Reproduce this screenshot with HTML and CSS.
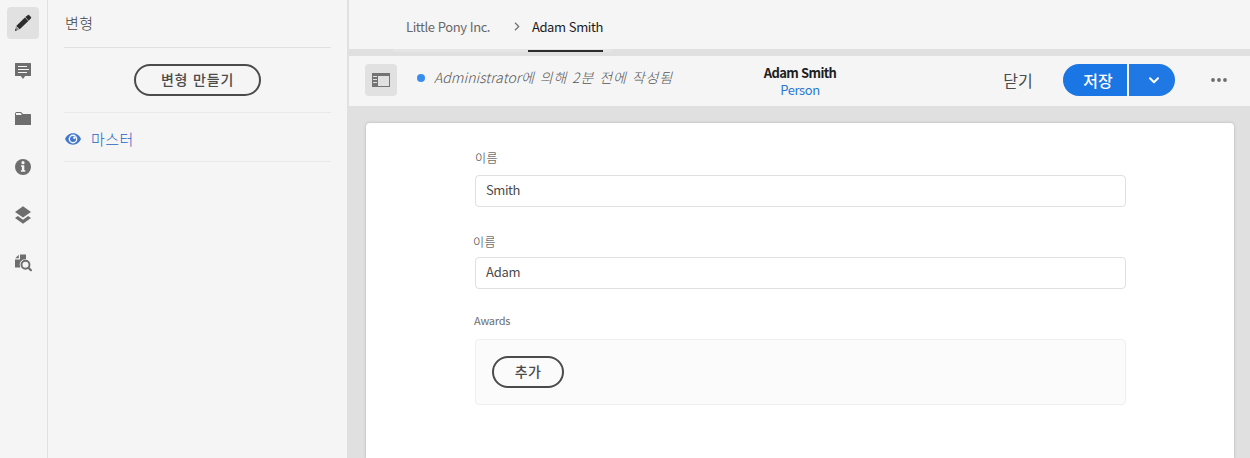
FILE: index.html
```html
<!DOCTYPE html>
<html lang="ko">
<head>
<meta charset="utf-8">
<title>Adam Smith</title>
<link rel="stylesheet" href="styles.css">
</head>
<body>
<div class="app">
  <nav class="rail">
    <button class="rail-btn active" aria-label="edit"><svg width="18" height="18" viewBox="0 0 18 18"><path fill="#2c2c2c" d="M11.3 3.1 14 .9q.5-.3 1 .1l2 2q.5.6 0 1.2l-2.3 2.5zM10.9 3.500l3.5 3.500-8.700 8.300-3.500-3.200z"/><path fill="#8a8a8a" d="m1.900 12.500 3.200 3.100L1 17z"/><path fill="#2c2c2c" d="m1.500 14.800 1.400 1.500L1 17z"/></svg></button>
    <button class="rail-btn" aria-label="comments"><svg width="18" height="18" viewBox="0 0 18 18"><path fill="#6e6e6e" d="M1.500 1h15q.5 0 .5.5v12q0 .5-.5.5h-5.300L9 17l-2.200-3H1.500q-.5 0-.5-.5v-12q0-.5.5-.5z"/><path stroke="#f5f5f5" d="M4 4.500h9M4 7.500h11M4 10.500h9"/></svg></button>
    <button class="rail-btn" aria-label="assets"><svg width="18" height="18" viewBox="0 0 18 18"><path fill="#6e6e6e" d="M1 3.500 2 2h5l2 2h7.500l.5.5v10.500H1z"/><path fill="#f5f5f5" d="M2 3h4.600l1.300 1.400L7 5H2z"/></svg></button>
    <button class="rail-btn" aria-label="info"><svg width="18" height="18" viewBox="0 0 18 18"><circle cx="9" cy="9" r="8" fill="#6e6e6e"/><circle cx="9" cy="4.700" r="1.600" fill="#f5f5f5"/><path fill="#f5f5f5" d="M7 7.200h3.300v5h1v1.600H6.900v-1.600h1V8.800H7z"/></svg></button>
    <button class="rail-btn" aria-label="structure"><svg width="18" height="18" viewBox="0 0 18 18"><path fill="#6e6e6e" d="M9 .2 17 6l-8 5.600L1 6zM9 13.700l5.100-3.600L17 12l-8 5.700L1 12l2.900-1.900z"/></svg></button>
    <button class="rail-btn" aria-label="search"><svg width="18" height="18" viewBox="0 0 18 18"><path fill="#6e6e6e" d="M6 .500h6v4.700a5.700 5.700 0 0 0-5.800 8.300H1V5.500h5zM4.800.700v3.600H1.200z"/><circle cx="11.500" cy="10.700" r="4" fill="none" stroke="#6e6e6e" stroke-width="1.900"/><path stroke="#6e6e6e" stroke-width="2.200" stroke-linecap="round" d="m14.500 13.800 2.400 2.400"/></svg></button>
  </nav>
  <aside class="panel">
    <h2 class="panel-title">변형</h2>
    <div class="create"><button class="pill create-btn">변형 만들기</button></div>
    <a class="master"><svg width="16" height="12" viewBox="0 0 16 12"><path fill="#4178cd" d="M8 .3C4 .3 1.400 3 0 6c1.400 3 4 5.700 8 5.700S14.600 9 16 6C14.600 3 12 .3 8 .3z"/><circle cx="8" cy="6" r="4.400" fill="#f5f5f5"/><circle cx="8" cy="6" r="3" fill="#4178cd"/><circle cx="9.400" cy="4.700" r="1.300" fill="#f5f5f5"/></svg><span>마스터</span></a>
  </aside>
  <main class="main">
    <header class="crumbs">
      <span class="crumb parent">Little Pony Inc.</span>
      <svg class="sep" width="6" height="9" viewBox="0 0 6 9"><path fill="none" stroke="#747474" stroke-width="1.300" d="m1 .8 3.700 3.700L1 8.200"/></svg>
      <span class="crumb current">Adam Smith</span>
    </header>
    <div class="track"><i></i></div>
    <section class="toolbar">
      <button class="toggle" aria-label="panel"><svg width="18" height="14" viewBox="0 0 18 14"><path fill="#747474" fill-rule="evenodd" d="M0 0h18v14H0zM6 3v10h11V3z"/><path stroke="#e1e1e1" d="M1 3.500h4M1 6.500h4M1 9.500h4"/></svg></button>
      <i class="dot"></i>
      <em class="status"><span class="latin">Administrator</span>에 의해 2분 전에 작성됨</em>
      <div class="heading"><strong>Adam Smith</strong><a>Person</a></div>
      <button class="close">닫기</button>
      <div class="split"><button class="save">저장</button><button class="more-save" aria-label="options"><svg width="10" height="7" viewBox="0 0 10 7"><path fill="none" stroke="#fff" stroke-width="2" stroke-linecap="round" stroke-linejoin="round" d="m1 1.200 4 4 4-4"/></svg></button></div>
      <svg class="dots" width="16" height="4" viewBox="0 0 16 4"><g fill="#6e6e6e"><circle cx="2" cy="2" r="1.900"/><circle cx="8" cy="2" r="1.900"/><circle cx="14" cy="2" r="1.900"/></g></svg>
    </section>
    <form class="card">
      <label class="label first">이름</label>
      <div class="input smith">Smith</div>
      <label class="label second">이름</label>
      <div class="input adam">Adam</div>
      <label class="label awards">Awards</label>
      <div class="multi"><button type="button" class="pill add">추가</button></div>
    </form>
  </main>
</div>
</body>
</html>
```

FILE: styles.css
```css
* { box-sizing: border-box; }
body { margin: 0; width: 1250px; height: 458px; overflow: hidden; font-family: "Noto Sans CJK KR", sans-serif; font-size: 14px; color: #4b4b4b; }
button { margin: 0; padding: 0; border: 0; background: none; font: inherit; color: inherit; }
svg { display: block; flex: none; }
.app { display: flex; height: 458px; background: #e0e0e0; }
.rail { width: 48px; padding: 7px 0 0 7px; background: #f5f5f5; border-right: 1px solid #e0e0e0; display: flex; flex-direction: column; gap: 16px; }
.rail-btn { width: 32px; height: 32px; border-radius: 4px; display: grid; place-items: center; }
.rail-btn.active { background: #e1e1e1; }
.panel { width: 299px; padding: 0 16px; background: #f5f5f5; }
.panel-title { margin: 0; height: 48px; padding: 10px 0 0 1px; border-bottom: 1px solid #e0e0e0; font-size: 15px; line-height: 26px; font-weight: 300; letter-spacing: .5px; color: #444; }
.create { height: 65px; padding-top: 16px; border-bottom: 1px solid #e9e9e9; display: flex; justify-content: center; }
.pill { height: 32px; border: 2px solid #4b4b4b; border-radius: 16px; line-height: 26px; padding-bottom: 2px; font-size: 14px; font-weight: 500; letter-spacing: .4px; color: #4b4b4b; }
.create-btn { width: 127px; letter-spacing: .8px; }
.master { height: 49px; padding: 3px 0 0 1px; border-bottom: 1px solid #e9e9e9; display: flex; align-items: center; gap: 10px; color: #2464c4; font-size: 15px; line-height: 24px; font-weight: 300; letter-spacing: .4px; }
.main { flex: 1; margin-left: 2px; display: flex; flex-direction: column; }
.crumbs { height: 49px; background: #f5f5f5; display: flex; align-items: flex-start; padding: 17px 0 0 57px; font-size: 13px; line-height: 20px; letter-spacing: -.42px; }
.crumb.parent { width: 108px; color: #686868; }
.sep { margin-top: 5px; }
.crumb.current { margin-left: 12px; color: #1c1c1c; }
.track { height: 3px; margin: 0 0 4px 44px; width: 219px; padding: 1px 0 0 135px; background: #e5e5e5; }
.track i { display: block; width: 75px; height: 2px; background: #2c2c2c; }
.toolbar { height: 50px; background: #f5f5f5; display: flex; align-items: flex-start; padding: 8px 0 0 16px; }
.toggle { width: 32px; height: 32px; border-radius: 4px; background: #e1e1e1; display: grid; place-items: center; }
.dot { width: 8px; height: 8px; margin: 10px 0 0 20px; border-radius: 50%; background: #378ef0; }
.status { width: 251px; margin: 1px 0 0 9px; line-height: 24px; font-weight: 300; letter-spacing: .93px; color: #555; white-space: nowrap; }
.latin { letter-spacing: .07px; }
.heading { width: 230px; display: flex; flex-direction: column; align-items: center; font-size: 13px; line-height: 18px; letter-spacing: -.45px; }
.heading strong { color: #1e1e1e; font-weight: 700; letter-spacing: -.65px; }
.heading a { margin-top: -1px; color: #2a78d6; }
.close { width: 32px; margin: 4px 0 0 87px; line-height: 24px; font-size: 16px; font-weight: 400; white-space: nowrap; }
.split { display: flex; gap: 2px; margin-left: 29px; height: 32px; color: #fff; }
.save { width: 64px; padding-left: 6px; background: #1a75e5; border-radius: 16px 0 0 16px; font-size: 16px; line-height: 30px; font-weight: 500; }
.more-save { width: 46px; padding-left: 3px; background: #1f78e4; border-radius: 0 16px 16px 0; display: grid; place-items: center; }
.dots { margin: 14px 0 0 36px; }
.card { width: 868px; flex: 1; margin: 17px 0 0 17px; padding: 0 0 0 109px; background: #fff; border-radius: 4px 4px 0 0; box-shadow: 0 0 2px 1px #c9c9c9; display: flex; flex-direction: column; align-items: flex-start; }
.label { font-size: 12px; line-height: 20px; height: 20px; font-weight: 300; letter-spacing: .4px; color: #333; }
.first { margin-top: 25px; }
.input { width: 651px; height: 32px; border: 1px solid #e0e0e0; border-radius: 4px; padding-left: 10px; line-height: 28px; font-size: 13px; letter-spacing: -.45px; }
.smith { margin-top: 7px; }
.second { margin: 25px 0 0 -2px; }
.adam { margin-top: 5px; letter-spacing: -.25px; }
.awards { margin-top: 21px; margin-left: -1px; font-size: 11px; font-weight: 400; letter-spacing: -.25px; color: #6e6e6e; }
.multi { width: 651px; height: 66px; margin-top: 9px; border: 1px solid #efefef; border-radius: 4px; background: #fbfbfb; padding: 16px; }
.add { width: 72px; }
```
